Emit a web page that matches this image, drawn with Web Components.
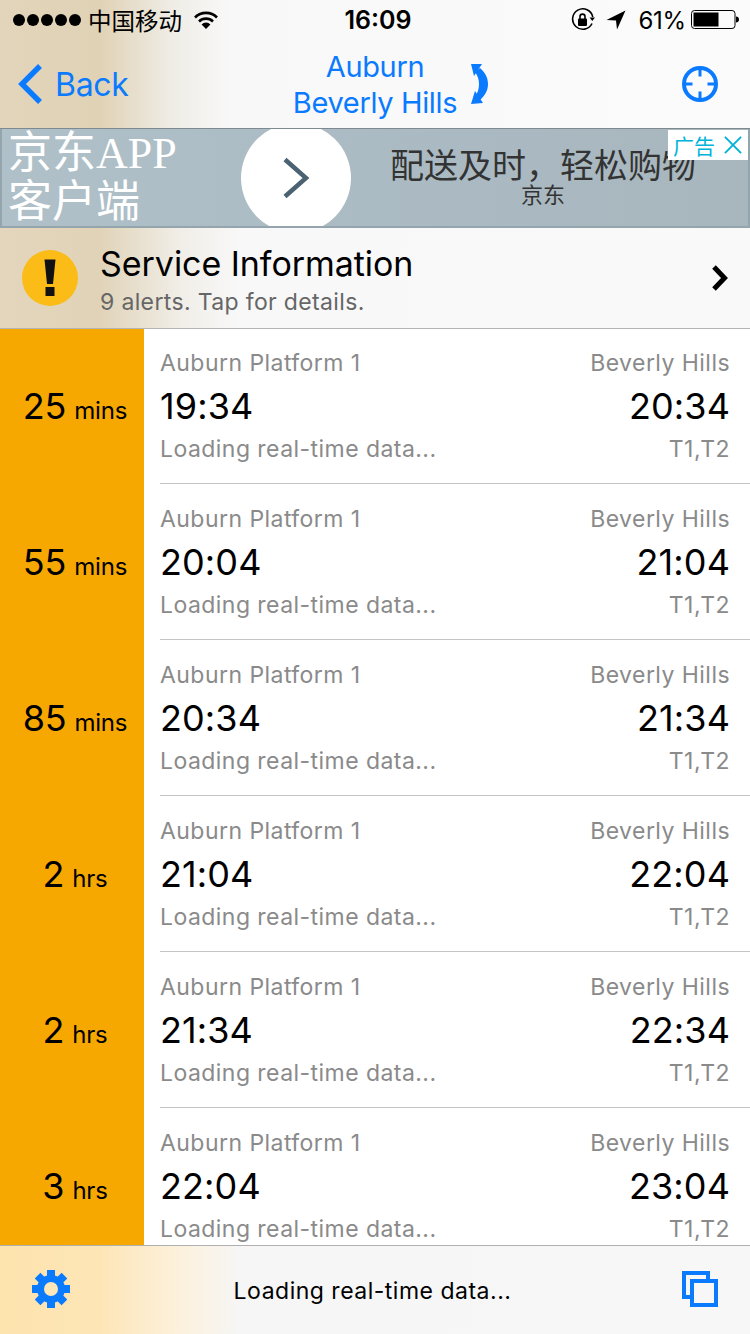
<!DOCTYPE html>
<html lang="zh">
<head>
<meta charset="utf-8">
<title>Trip Planner</title>
<style>
  html, body { margin: 0; padding: 0; background: #fff; }
  body { font-family: Inter, "Noto Sans CJK SC", sans-serif; width: 750px; height: 1334px; overflow: hidden; }
</style>
</head>
<body>
<trip-app></trip-app>

<script>
const TRIPS = [
  ['25', 'mins', '19:34', '20:34'],
  ['55', 'mins', '20:04', '21:04'],
  ['85', 'mins', '20:34', '21:34'],
  ['2', 'hrs', '21:04', '22:04'],
  ['2', 'hrs', '21:34', '22:34'],
  ['3', 'hrs', '22:04', '23:04'],
];

class TopBar extends HTMLElement {
  constructor() {
    super();
    this.attachShadow({ mode: 'open' });
    this.shadowRoot.innerHTML = `
      <style>
        :host {
          display: block;
          height: 128px;
          border-bottom: 1px solid #7f8a90;
          background: linear-gradient(90deg, #e2d5bb 0, #e0d2b5 100px, #efece5 170px, #f8f8f8 230px, #fbfbfb 100%);
          color: #000;
        }
        .status {
          height: 40px;
          display: grid;
          grid-template-columns: 1fr auto 1fr;
          align-items: center;
          padding: 0 11px 0 13px;
        }
        .dots { display: flex; gap: 2px; margin-right: 9px; }
        .dots i { width: 12px; height: 12px; border-radius: 50%; background: #000; }
        .carrier { font-family: "Noto Sans CJK SC", sans-serif; font-size: 23.5px; line-height: 40px; margin-right: 12px; margin-left: -2px; }
        .left { display: flex; align-items: center; }
        .right { display: flex; align-items: center; justify-content: flex-end; }
        .time { font-size: 25px; font-weight: 600; width: 70px; text-align: center; margin-left: 4px; }
        .pct { font-size: 24px; margin: 0 5px 0 12px; letter-spacing: -0.2px; }
        .rot { margin-right: 11px; }
        svg { display: block; }
        .nav {
          height: 88px;
          display: grid;
          grid-template-columns: 1fr auto 1fr;
          align-items: center;
          color: #0a7aff;
        }
        .back { display: flex; align-items: center; gap: 12px; font-size: 32px; letter-spacing: -0.3px; padding-left: 17px; }
        .title { font-size: 29px; line-height: 36px; text-align: center; letter-spacing: -0.35px; margin-top: 2px; }
        .swap { margin-left: 14px; margin-right: -31px; }
        .center { display: flex; align-items: center; }
        .end { display: flex; justify-content: flex-end; padding-right: 32px; }
      </style>
      <div class="status">
        <div class="left">
          <div class="dots"><i></i><i></i><i></i><i></i><i></i></div>
          <span class="carrier">中国移动</span>
          <svg width="24" height="18" viewBox="0 0 24 18">
            <path d="M1 6.500a15.500 15.500 0 0 1 22 0" fill="none" stroke="#000" stroke-width="2.600"/>
            <path d="M5 10.500a10 10 0 0 1 14 0" fill="none" stroke="#000" stroke-width="2.600"/>
            <path d="M7.600 13.400a6 6 0 0 1 8.800 0L12 18z" fill="#000"/>
          </svg>
        </div>
        <span class="time">16:09</span>
        <div class="right">
          <svg class="rot" width="24" height="24" viewBox="0 0 24 24">
            <path d="M21 15.500A10.200 10.200 0 1 1 21.800 9" fill="none" stroke="#000" stroke-width="1.600"/>
            <path d="M18.600 9.500h5.400l-2.700 3.600z" fill="#000"/>
            <rect x="7" y="10.500" width="9" height="7.500" rx="1" fill="#000"/>
            <path d="M9 11V8.600a2.500 2.500 0 0 1 5 0V11" fill="none" stroke="#000" stroke-width="1.600"/>
          </svg>
          <svg width="20" height="20" viewBox="0 0 20 20"><path d="M19.500 .5L11 19.500 10 10.500 .5 10z" fill="#000"/></svg>
          <span class="pct">61%</span>
          <svg width="48" height="20" viewBox="0 0 48 20">
            <rect x=".5" y=".5" width="43.500" height="18" rx="3" fill="none" stroke="#000"/>
            <rect x="2.500" y="2.500" width="25" height="14" fill="#000"/>
            <path d="M45 6.500c1.800 0 3 1 3 3s-1.200 3-3 3z" fill="#000"/>
          </svg>
        </div>
      </div>
      <div class="nav">
        <div class="back">
          <svg width="26" height="42" viewBox="0 0 26 42"><path d="M23 3L5 21l18 18" fill="none" stroke="#0a7aff" stroke-width="5.500"/></svg>
          <span>Back</span>
        </div>
        <div class="center">
          <div class="title">Auburn<br>Beverly Hills</div>
          <svg class="swap" width="17" height="42" viewBox="0 0 17 42">
            <path d="M9 5C15 10 17 16 17 21S15 32 9 37L4 33C7 30 8 25 8 21S7 13 4 9z" fill="#0a7aff"/>
            <path d="M0 1L11 1 3 13z" fill="#0a7aff"/>
            <path d="M0 41L12 40 4 28z" fill="#0a7aff"/>
          </svg>
        </div>
        <div class="end">
          <svg width="36" height="36" viewBox="0 0 36 36">
            <circle cx="18" cy="18" r="16" fill="none" stroke="#0a7aff" stroke-width="4"/>
            <path d="M18 3v7.500M18 25.500V33M3 18h7.500M25.500 18H33" stroke="#0a7aff" stroke-width="3"/>
          </svg>
        </div>
      </div>
    `;
  }
}

class AdBanner extends HTMLElement {
  constructor() {
    super();
    this.attachShadow({ mode: 'open' });
    this.shadowRoot.innerHTML = `
      <style>
        :host {
          display: block;
          position: relative;
          height: 99px;
          box-sizing: border-box;
          border: 2px solid #95a5ae;
          border-top: 0;
          background: linear-gradient(90deg, #afc0c8 0, #a8b6be 100%);
          overflow: hidden;
        }
        .row { display: flex; height: 100%; align-items: center; }
        .big {
          width: 239px;
          box-sizing: border-box;
          padding-left: 6px;
          color: #fff;
          font-family: "Liberation Serif", "Noto Sans CJK SC", serif;
          font-size: 44px;
          line-height: 49px;
          white-space: nowrap;
        }
        .circle {
          width: 110px;
          height: 110px;
          flex: none;
          border-radius: 50%;
          background: #fff;
          display: flex;
          align-items: center;
          justify-content: center;
        }
        .copy {
          flex: 1;
          text-align: center;
          font-family: "Noto Sans CJK SC", sans-serif;
          color: #333;
          padding-right: 13px;
          margin-top: -8px;
        }
        .copy div:first-child { font-size: 34px; line-height: 42px; white-space: nowrap; }
        .copy div:last-child { font-size: 22px; line-height: 22px; margin-top: -3px; }
        /* ad mark sits on top of the banner */
        .mark {
          position: absolute;
          top: 1px;
          right: 0;
          width: 80px;
          height: 30px;
          background: #fff;
          display: flex;
          align-items: center;
          gap: 9px;
          box-sizing: border-box;
          padding-left: 5px;
          color: #00b4d8;
          font-family: "Noto Sans CJK SC", sans-serif;
          font-size: 21px;
          line-height: 30px;
        }
      </style>
      <div class="row">
        <div class="big">京东APP<br>客户端</div>
        <div class="circle">
          <svg width="28" height="42" viewBox="0 0 28 42"><path d="M3 2.500L24 21 3 39.500" fill="none" stroke="#4a6272" stroke-width="4.500"/></svg>
        </div>
        <div class="copy"><div>配送及时，轻松购物</div><div>京东</div></div>
      </div>
      <div class="mark"><span>广告</span>
        <svg width="18" height="18" viewBox="0 0 19 19"><path d="M1 1l17 17M18 1L1 18" stroke="#00b4d8" stroke-width="2"/></svg>
      </div>
    `;
  }
}

class ServiceInfo extends HTMLElement {
  constructor() {
    super();
    this.attachShadow({ mode: 'open' });
    this.shadowRoot.innerHTML = `
      <style>
        :host {
          display: flex;
          align-items: center;
          height: 100px;
          flex: none;
          position: relative;
          z-index: 1;
          box-sizing: border-box;
          box-shadow: 0 1px 0 #b4b4b4;
          padding: 0 21px 0 22px;
          background: linear-gradient(90deg, #e3d6bc 0, #e0d3b8 100px, #f1eee8 180px, #f8f8f8 240px, #f9f9f9 100%);
        }
        .badge {
          width: 56px;
          height: 56px;
          flex: none;
          border-radius: 50%;
          background: #fbbc18;
          margin-right: 23px;
        }
        .text { flex: 1; }
        .head { font-size: 34px; line-height: 40px; letter-spacing: -0.05px; color: #000; margin: 3px 0 0 -1px; }
        .sub { font-size: 23px; line-height: 28px; letter-spacing: .35px; color: #666; margin: 4px 0 0 -1px; }
        svg { display: block; }
      </style>
      <div class="badge">
        <svg width="56" height="56" viewBox="0 0 56 56"><path d="M22.500 9.500h11L31 34h-6z" fill="#111"/><rect x="23.500" y="37" width="9" height="9" fill="#111"/></svg>
      </div>
      <div class="text">
        <div class="head">Service Information</div>
        <div class="sub">9 alerts. Tap for details.</div>
      </div>
      <svg width="18" height="28" viewBox="0 0 18 28"><path d="M3 3l10.500 11L3 25" fill="none" stroke="#000" stroke-width="5"/></svg>
    `;
  }
}

class TripRow extends HTMLElement {
  constructor() {
    super();
    this.attachShadow({ mode: 'open' });
    this.shadowRoot.innerHTML = `
      <style>
        :host { display: flex; height: 156px; flex: none; }
        .wait {
          width: 144px;
          flex: none;
          background: #f6a800;
          display: flex;
          align-items: baseline;
          justify-content: center;
          gap: 8px;
          color: #000;
          box-sizing: border-box;
          padding: 56px 0 0 6px;
          line-height: 44px;
        }
        .num { font-size: 36px; letter-spacing: -.2px; }
        .unit { font-size: 24px; letter-spacing: -.2px; }
        .body {
          flex: 1;
          margin-left: 16px;
          padding-right: 20px;
          box-sizing: border-box;
          border-bottom: 1px solid #c4c4c4;
          display: grid;
          grid-template-columns: 1fr auto;
          grid-auto-rows: min-content;
          padding-top: 20px;
          font-size: 23px;
          letter-spacing: .45px;
          color: #8a8a8a;
        }
        .muted { line-height: 30px; white-space: nowrap; }
        .clock { font-size: 36px; line-height: 44px; color: #000; letter-spacing: .1px; margin: 6px 0 6px; }
        .r { text-align: right; }
      </style>
      <div class="wait"><span class="num"></span><span class="unit"></span></div>
      <div class="body">
        <div class="muted">Auburn Platform 1</div><div class="muted r">Beverly Hills</div>
        <div class="clock dep"></div><div class="clock r arr"></div>
        <div class="muted">Loading real-time data...</div><div class="muted r">T1,T2</div>
      </div>
    `;
  }

  connectedCallback() {
    const $ = (s) => this.shadowRoot.querySelector(s);
    $('.num').textContent = this.getAttribute('wait');
    $('.unit').textContent = this.getAttribute('unit');
    $('.dep').textContent = this.getAttribute('dep');
    $('.arr').textContent = this.getAttribute('arr');
  }
}

class BottomBar extends HTMLElement {
  constructor() {
    super();
    this.attachShadow({ mode: 'open' });
    this.shadowRoot.innerHTML = `
      <style>
        :host {
          display: flex;
          align-items: center;
          flex: none;
          height: 89px;
          box-sizing: border-box;
          border-top: 1px solid #b0b0b0;
          padding: 0 32px;
          background: linear-gradient(90deg, #fde3ae 0, #fde5b6 100px, #fdf0d8 170px, #f6f6f6 240px, #f7f7f7 100%);
        }
        .msg { flex: 1; text-align: center; font-size: 23px; letter-spacing: .5px; color: #000; padding-right: 7px; margin-top: 2px; }
        svg { display: block; margin-top: -2px; }
      </style>
      <svg width="38" height="38" viewBox="0 0 38 38">
        <g fill="#0a7aff">
          <circle cx="19" cy="19" r="14"/>
          <rect x="15" y="0" width="8" height="38"/>
          <rect x="0" y="15" width="38" height="8"/>
          <rect x="15" y="0" width="8" height="38" transform="rotate(45 19 19)"/>
          <rect x="15" y="0" width="8" height="38" transform="rotate(-45 19 19)"/>
        </g>
        <circle cx="19" cy="19" r="7" fill="#fde6b8"/>
      </svg>
      <div class="msg">Loading real-time data...</div>
      <svg width="36" height="36" viewBox="0 0 36 36">
        <rect x="2" y="2" width="24" height="24" fill="none" stroke="#0a7aff" stroke-width="4"/>
        <rect x="10" y="10" width="24" height="24" fill="#f7f7f7" stroke="#0a7aff" stroke-width="4"/>
      </svg>
    `;
  }
}

class TripApp extends HTMLElement {
  constructor() {
    super();
    this.attachShadow({ mode: 'open' });
    const rows = TRIPS.map(([wait, unit, dep, arr]) =>
      `<trip-row wait="${wait}" unit="${unit}" dep="${dep}" arr="${arr}"></trip-row>`).join('');
    this.shadowRoot.innerHTML = `
      <style>
        :host { display: flex; flex-direction: column; height: 1334px; width: 750px; overflow: hidden; }
        .list { flex: 1; min-height: 0; overflow: hidden; display: flex; flex-direction: column; }
      </style>
      <top-bar></top-bar>
      <ad-banner></ad-banner>
      <service-info></service-info>
      <div class="list">${rows}</div>
      <bottom-bar></bottom-bar>
    `;
  }
}

customElements.define('top-bar', TopBar);
customElements.define('ad-banner', AdBanner);
customElements.define('service-info', ServiceInfo);
customElements.define('trip-row', TripRow);
customElements.define('bottom-bar', BottomBar);
customElements.define('trip-app', TripApp);
</script>
</body>
</html>
